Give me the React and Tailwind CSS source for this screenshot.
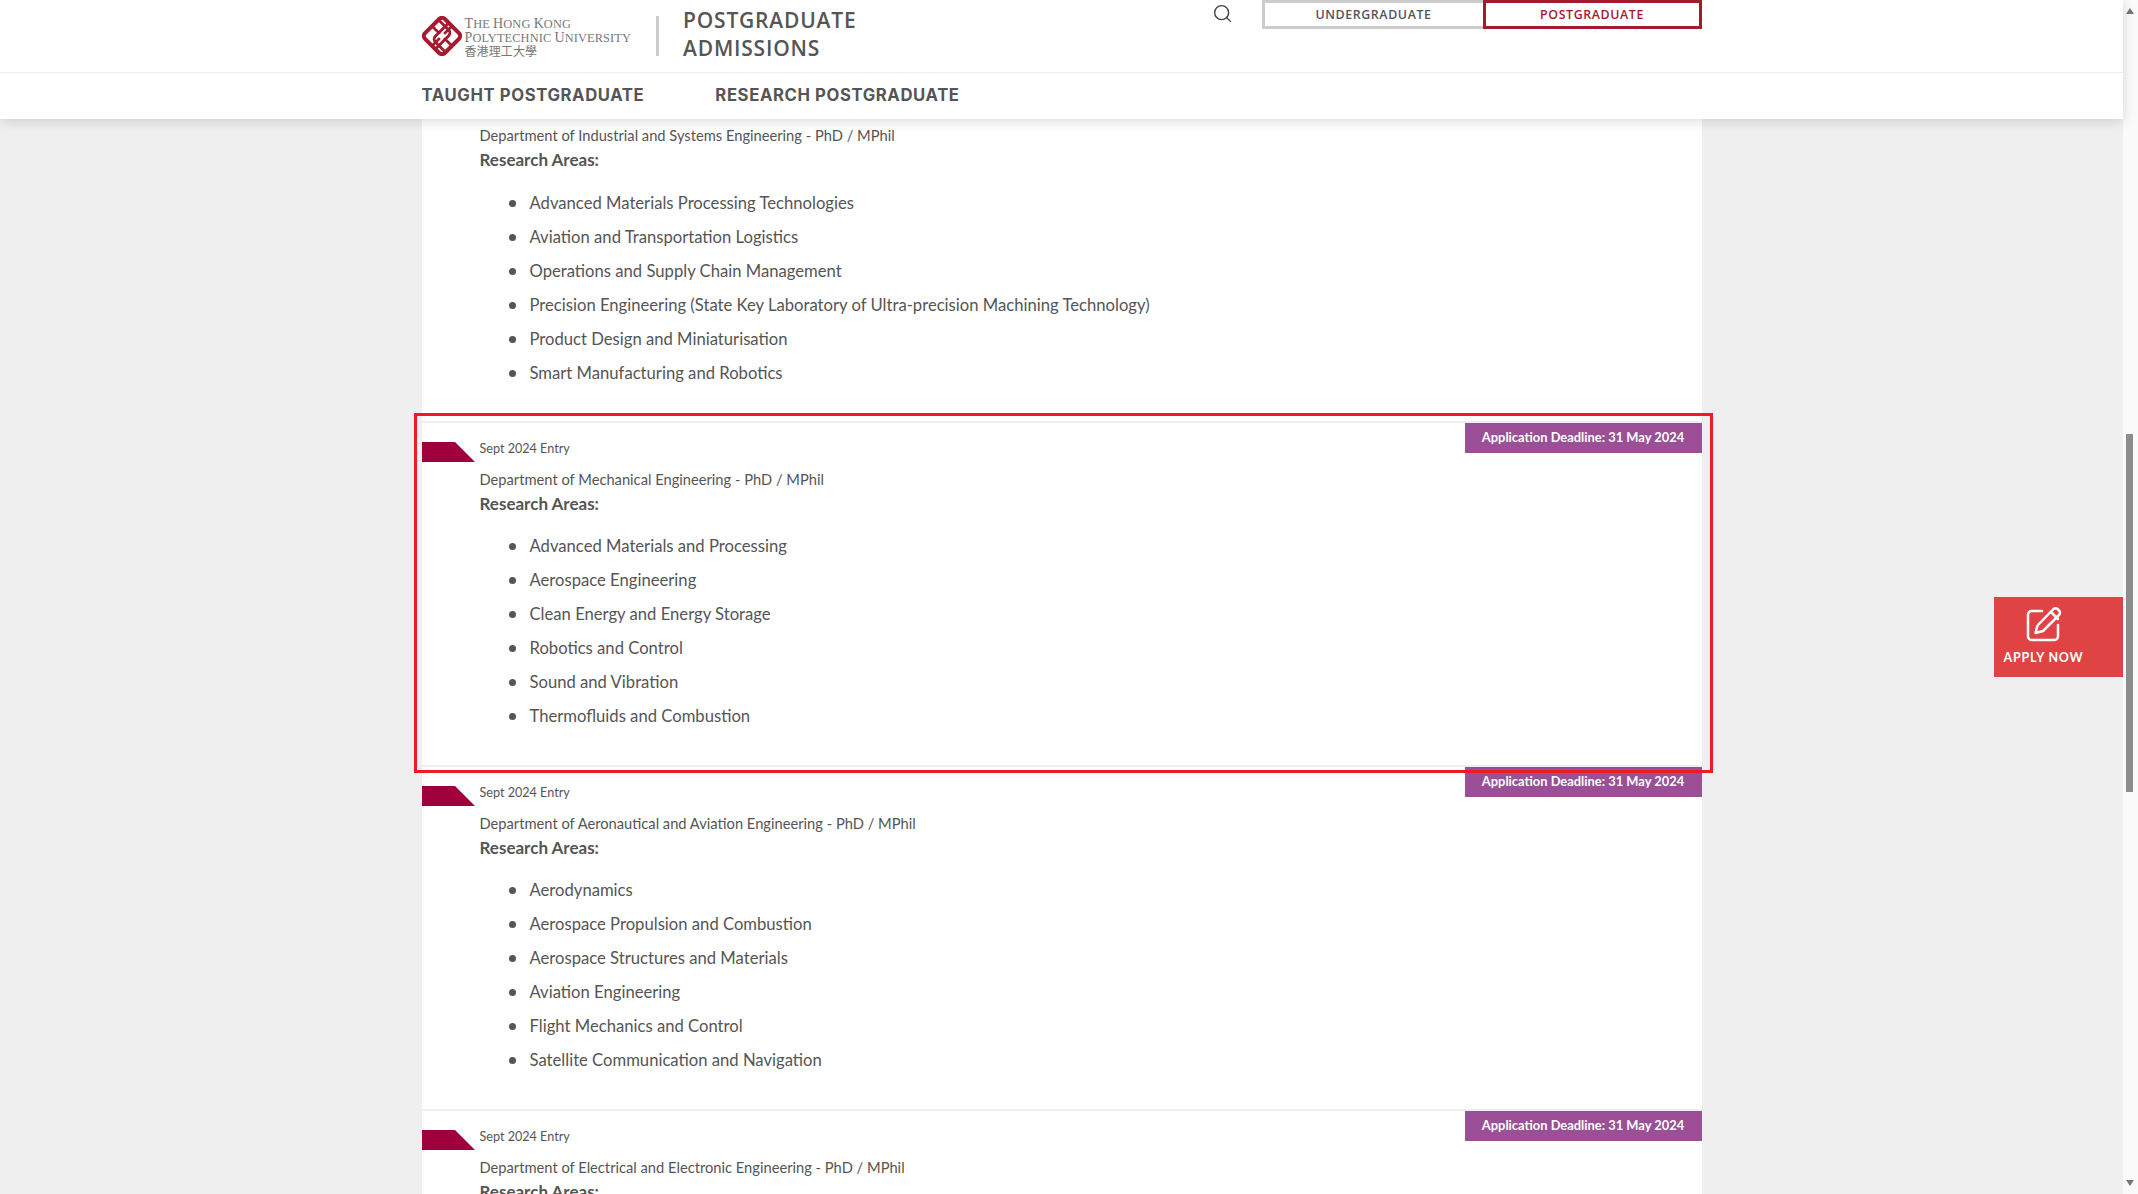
import { Search } from 'lucide-react';

const sections = [
  {
    department: 'Department of Mechanical Engineering - PhD / MPhil',
    areas: [
      'Advanced Materials and Processing',
      'Aerospace Engineering',
      'Clean Energy and Energy Storage',
      'Robotics and Control',
      'Sound and Vibration',
      'Thermofluids and Combustion',
    ],
  },
  {
    department: 'Department of Aeronautical and Aviation Engineering - PhD / MPhil',
    areas: [
      'Aerodynamics',
      'Aerospace Propulsion and Combustion',
      'Aerospace Structures and Materials',
      'Aviation Engineering',
      'Flight Mechanics and Control',
      'Satellite Communication and Navigation',
    ],
  },
  {
    department: 'Department of Electrical and Electronic Engineering - PhD / MPhil',
    areas: [],
  },
];

const firstAreas = [
  'Advanced Materials Processing Technologies',
  'Aviation and Transportation Logistics',
  'Operations and Supply Chain Management',
  'Precision Engineering (State Key Laboratory of Ultra-precision Machining Technology)',
  'Product Design and Miniaturisation',
  'Smart Manufacturing and Robotics',
];

const Logo = () => (
  <svg width="40" height="40" viewBox="0 0 40 40" className="shrink-0">
    <g transform="rotate(45 20 20)" fill="none" stroke="#a6192e">
      <rect x="6" y="6" width="28" height="28" rx="4" strokeWidth="4" />
      <path d="M15.500 6.500V25a4 4 0 0 0 4 4H33M24.500 33.500V15a4 4 0 0 0-4-4H7" strokeWidth="2.800" />
      <path d="M6.500 20H17M23 20H33.500M20 6.500V17M20 23V33.500" strokeWidth="2.800" />
    </g>
  </svg>
);

const AreaList = ({ areas }) => (
  <ul className="mt-[13px] pl-[87px] list-none">
    {areas.map((area) => (
      <li key={area} className="flex items-center h-[34px] text-[16.65px] text-[#555]">
        <span className="w-[7px] h-[7px] rounded-full bg-[#555] mr-[14px] shrink-0"></span>
        {area}
      </li>
    ))}
  </ul>
);

const Section = ({ department, areas }) => (
  <section className="relative border-t-2 border-[#efefef] h-[344px]">
    <div className="absolute top-0 right-0 w-[237px] h-[30px] bg-[#9b4f96] flex items-center justify-center text-white text-[12.9px] font-bold">
      Application Deadline: 31 May 2024
    </div>
    <div className="flex items-start pt-[19px]">
      <svg width="53" height="20" viewBox="0 0 53 20" className="shrink-0">
        <polygon points="0,0 33,0 53,20 0,20" fill="#a0003c" />
      </svg>
      <span className="ml-[5px] text-[12.6px] leading-[14px] text-[#555]">Sept 2024 Entry</span>
    </div>
    <div className="pl-[58px] mt-[5px] text-[14.7px] leading-[24px] text-[#555]">{department}</div>
    <div className="pl-[58px] mt-[1px] text-[17px] leading-[24px] font-bold text-[#555]">Research Areas:</div>
    <AreaList areas={areas} />
  </section>
);

const App = () => {
  return (
    <div className="relative w-[2138px] h-[1194px] overflow-hidden flex bg-[#efefef] font-['Lato',sans-serif]">
      <div className="w-[2123px] h-full flex flex-col">
        {/* Header */}
        <header className="relative z-10 bg-white shadow-[0_2px_12px_rgba(0,0,0,0.15)] shrink-0">
          <div className="h-[72px] w-[1280px] mx-auto flex items-start">
            <div className="flex items-center h-[72px]">
              <Logo />
              <div className="ml-[3px] font-['Liberation_Serif',serif] text-[#777] text-[12.4px] leading-[13px] tracking-[0.1px]">
                <div><span className="text-[14px]">T</span>HE <span className="text-[14px]">H</span>ONG <span className="text-[14px]">K</span>ONG</div>
                <div><span className="text-[14px]">P</span>OLYTECHNIC <span className="text-[14px]">U</span>NIVERSITY</div>
                <div className="font-['Noto_Sans_CJK_TC',sans-serif] text-[12px] leading-[11px]">香港理工大學</div>
              </div>
            </div>
            <div className="w-[3px] h-[40px] bg-[#ccc] mt-[16px] ml-[25px]"></div>
            <div className="ml-[24px] mt-[6px] font-['Open_Sans',sans-serif] font-semibold text-[21px] leading-[28px] tracking-[0.8px] text-[#555]">
              POSTGRADUATE<br />ADMISSIONS
            </div>
            <div className="ml-auto flex items-start">
              <Search className="mt-[3px] mr-[29px] text-[#444]" size={21} strokeWidth={1.6} />
              <div className="w-[221px] h-[29px] pt-[2px] border-[3px] border-r-0 border-[#ccc] flex items-center justify-center font-['Open_Sans',sans-serif] font-semibold text-[12.4px] tracking-[0.6px] text-[#555]">
                UNDERGRADUATE
              </div>
              <div className="w-[219px] h-[29px] pt-[2px] border-[3px] border-[#a6192e] flex items-center justify-center font-['Open_Sans',sans-serif] font-semibold text-[12.4px] tracking-[0.6px] text-[#a6192e]">
                POSTGRADUATE
              </div>
            </div>
          </div>
          <nav className="h-[47px] border-t border-[#eee]">
            <div className="w-[1280px] mx-auto h-full flex items-center gap-[71px] pb-[1px] font-['Inter',sans-serif] font-bold text-[16.7px] tracking-[0.6px] text-[#555]">
              <a href="#taught">TAUGHT POSTGRADUATE</a>
              <a href="#research">RESEARCH POSTGRADUATE</a>
            </div>
          </nav>
        </header>

        {/* Main content */}
        <main className="w-[1280px] mx-auto bg-white flex-1 overflow-hidden">
          <div className="h-[302px]">
            <div className="pl-[58px] pt-[4px] text-[14.7px] leading-[24px] text-[#555]">
              Department of Industrial and Systems Engineering - PhD / MPhil
            </div>
            <div className="pl-[58px] text-[17px] leading-[26px] font-bold text-[#555]">Research Areas:</div>
            <AreaList areas={firstAreas} />
          </div>
          {sections.map((section) => (
            <Section key={section.department} {...section} />
          ))}
        </main>
      </div>

      {/* Scrollbar */}
      <div className="w-[15px] h-full bg-[#fafafa] relative">
        <div className="absolute left-[3px] top-[434px] w-[7px] h-[358px] bg-[#8c8c8c]"></div>
        <div className="absolute left-[3px] top-[8px] w-0 h-0 border-x-[4.5px] border-x-transparent border-b-[6px] border-b-[#777]"></div>
        <div className="absolute left-[3px] bottom-[8px] w-0 h-0 border-x-[4.5px] border-x-transparent border-t-[6px] border-t-[#777]"></div>
      </div>

      {/* Highlight */}
      <div className="absolute left-[414px] top-[413px] w-[1299px] h-[360px] border-[3px] border-[#ed1c24] pointer-events-none z-20"></div>

      {/* Apply now */}
      <div className="absolute left-[1994px] top-[597px] w-[129px] h-[80px] bg-[#e04344] flex flex-col items-center pr-[30px] text-white z-20">
        <svg width="36" height="36" viewBox="0 0 36 36" fill="none" stroke="currentColor" strokeWidth="2.500" strokeLinejoin="round" strokeLinecap="round" className="mt-[9px]">
          <path d="M16 5H5.500A3.500 3.500 0 0 0 2 8.500v22A3.500 3.500 0 0 0 5.500 34h23a3.500 3.500 0 0 0 3.500-3.500V19" />
          <path d="M27 3.500a3 3 0 0 1 5 0l1 1a3 3 0 0 1 0 4.500L17 25l-7.500 2 2-7.500z" />
          <path d="M25 6l7 7" />
        </svg>
        <span className="mt-[9px] text-[12.5px] font-bold tracking-[0.8px] leading-[14px] whitespace-nowrap">APPLY NOW</span>
      </div>
    </div>
  );
};

export default App;
